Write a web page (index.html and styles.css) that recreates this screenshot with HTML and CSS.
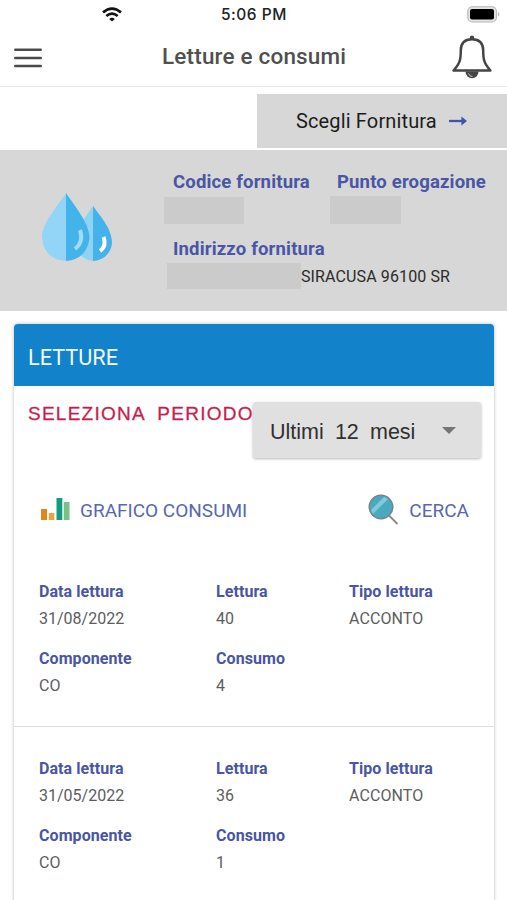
FILE: index.html
```html
<!DOCTYPE html>
<html lang="it">
<head>
<meta charset="utf-8">
<title>Letture e consumi</title>
<link rel="stylesheet" href="styles.css">
</head>
<body>
<div class="status">
  <svg class="wifi" viewBox="0 0 20 15" width="20" height="15" fill="none" stroke="#111" stroke-width="2.7"><path d="M1 5.4Q10-2.3 19 5.4M4.3 9Q10 4.3 15.7 9"/><path d="M7.2 11.9Q10 9.6 12.8 11.9L10 14.6z" fill="#111" stroke="none"/></svg>
  <span class="time">5:06 PM</span>
  <svg class="battery" viewBox="0 0 33 17" width="33" height="17"><rect x=".8" y=".8" width="28.6" height="15.2" rx="4.5" fill="#e4e4e4" stroke="#b5b5b5" stroke-width="1.1"/><rect x="3" y="3" width="24" height="10.6" rx="2" fill="#000"/><path d="M31 6q2.6 2 0 4.6z" fill="#b5b5b5"/></svg>
</div>
<header class="topbar">
  <svg class="menu" viewBox="0 0 28 20" width="28" height="20" stroke="#4a4a4a" stroke-width="2.5" stroke-linecap="round"><path d="M1.3 1.7h25.4M1.3 9.9h25.4M1.3 18h25.4"/></svg>
  <h1 class="title">Letture e consumi</h1>
  <svg class="bell" viewBox="0 0 40 44" width="40" height="44"><path d="M13.500 36.500a6.500 6.800 0 0 0 13 0z" fill="#454545"/><path d="M16.500 38.500q1 3 4 3.200" fill="none" stroke="#ccc" stroke-width="1"/><circle cx="20" cy="2.700" r="2.200" fill="#454545"/><path d="M20 4.200C12 4.200 8.800 9 8.800 15.500C8.800 25 7.800 28.500 1.600 35.500H38.400C32.200 28.500 31.200 25 31.200 15.500C31.200 9 28 4.200 20 4.200z" fill="#fff" stroke="#454545" stroke-width="2.500" stroke-linejoin="round"/></svg>
</header>
<div class="choose-row">
  <button class="choose"><span>Scegli Fornitura</span><svg viewBox="0 0 18 10" width="18" height="10"><path d="M0 5h14" stroke="#4253ab" stroke-width="2.300"/><path d="M12.400.6L18 5l-5.600 4.400z" fill="#4253ab"/></svg></button>
</div>
<section class="supply">
  <svg class="drops" viewBox="0 0 72 70" width="72" height="70"><path d="M51 14C57 23 70 36 70 51Q68 67 51 69Q36 67 34 51C34 36 45 23 51 14z" fill="#8fd3f4"/><path d="M51 14C57 23 70 36 70 51Q68 67 51 69z" fill="#43b3ea"/><path d="M24 1C33 15 47.500 31 47.500 46Q45 67 24 69Q2 67 0 46C0 31 15 15 24 1z" fill="#93d5f6"/><path d="M24 1C33 15 47.500 31 47.500 46Q45 67 24 69z" fill="#43b3ea"/><path d="M38 38Q42 50 33 57" fill="none" stroke="#a0dbf7" stroke-width="4"/><path d="M61.500 45Q65 54 58 59" fill="none" stroke="#fff" stroke-width="4"/></svg>
  <div class="supply-info">
    <div class="supply-pair">
      <div class="code"><div class="label">Codice fornitura</div><div class="mask mask-code"></div></div>
      <div class="point"><div class="label">Punto erogazione</div><div class="mask mask-point"></div></div>
    </div>
    <div class="label">Indirizzo fornitura</div>
    <div class="address"><div class="mask mask-address"></div><span>SIRACUSA 96100 SR</span></div>
  </div>
</section>
<main class="card">
  <h2 class="card-head">LETTURE</h2>
  <div class="period">
    <span class="period-label">SELEZIONA PERIODO</span>
    <div class="select"><span>Ultimi 12 mesi</span><svg viewBox="0 0 14 7" width="14" height="7"><path d="M0 0h14L7 7z" fill="#757575"/></svg></div>
  </div>
  <div class="actions">
    <a class="action"><svg viewBox="0 0 29 24" width="29" height="24"><path d="M0 12h6v11H0z" fill="#e18717"/><path d="M7.800 16h5.500v7H7.800z" fill="#efa13a"/><path d="M15.500 1h5.800v22h-5.800z" fill="#159a80"/><path d="M22.700 5h5.800v18h-5.800z" fill="#79c283"/></svg><span>GRAFICO CONSUMI</span></a>
    <a class="action"><svg viewBox="0 0 31 31" width="31" height="31"><path d="M21 21.500L29.500 30" stroke="#888" stroke-width="1.800"/><circle cx="13" cy="13" r="11.800" fill="#48a9bf" stroke="#77838b" stroke-width="1.400"/><path d="M3 16L16 3l4 2L5 20z" fill="#7fcbdc"/></svg><span>CERCA</span></a>
  </div>
  <section class="reading">
    <div><b>Data lettura</b><span>31/08/2022</span></div><div><b>Lettura</b><span>40</span></div><div><b>Tipo lettura</b><span class="type">ACCONTO</span></div>
    <div><b>Componente</b><span>CO</span></div><div><b>Consumo</b><span>4</span></div>
  </section>
  <section class="reading">
    <div><b>Data lettura</b><span>31/05/2022</span></div><div><b>Lettura</b><span>36</span></div><div><b>Tipo lettura</b><span class="type">ACCONTO</span></div>
    <div><b>Componente</b><span>CO</span></div><div><b>Consumo</b><span>1</span></div>
  </section>
</main>
</body>
</html>
```
FILE: styles.css
```css
* { box-sizing: border-box; }
body { margin: 0; height: 900px; overflow: hidden; background: #fff; font-family: Roboto, sans-serif; color: #333; }
svg { display: block; flex: none; }
.status { height: 30px; display: grid; grid-template-columns: 102px 20px 1fr 33px; align-items: start; padding-right: 7px; }
.wifi { grid-column: 2; margin-top: 7px; }
.time { font: 500 15.500px/20px Inter, sans-serif; color: #222; letter-spacing: .5px; margin: 5px 0 0 99px; white-space: nowrap; }
.battery { margin-top: 6px; }
.topbar { height: 57px; border-bottom: 1px solid #e9e9e9; display: flex; align-items: center; padding: 0 15px 0 14px; }
.title { flex: 1; margin: 0 0 4px; padding-left: 120px; font-size: 22.500px; line-height: 30px; font-weight: 500; letter-spacing: .18px; color: #505050; white-space: nowrap; }
.bell { margin-bottom: 2px; }
.choose-row { height: 63px; display: flex; justify-content: flex-end; padding-top: 7px; }
.choose { width: 250px; height: 54px; border: 0; padding: 0 40px 0 39px; background: #d7d7d7; display: flex; align-items: center; justify-content: space-between; font: 400 20px/30px Roboto, sans-serif; letter-spacing: .14px; color: #1c1c1c; white-space: nowrap; }
.supply { height: 161px; background: #d7d7d7; display: flex; }
.drops { margin: 42px 0 0 42px; }
.supply-info { width: 343px; margin-left: 50px; padding-top: 20px; }
.supply-pair { display: flex; height: 67px; }
.code { width: 166px; }
.label { font-size: 18.500px; line-height: 24px; font-weight: 700; letter-spacing: .17px; color: #4856a5; padding-left: 9px; white-space: nowrap; }
.point .label { padding-left: 7px; }
.mask { background: #cbcbcb; flex: none; }
.mask-code { width: 80px; height: 27px; margin-top: 3px; }
.mask-point { width: 71px; height: 28px; margin-top: 2px; }
.address { height: 26px; display: flex; margin: 2px 0 0 3px; font-size: 16px; line-height: 26px; letter-spacing: .12px; color: #2b2b2b; white-space: nowrap; }
.address span { padding-top: 1px; }
.mask-address { width: 134px; height: 26px; }
.card { width: 480px; height: 620px; margin: 13px 0 0 14px; border-radius: 4px 4px 0 0; box-shadow: 0 0 3px 1px #d4d4d4; }
.card-head { margin: 0; height: 62px; background: #1283cb; border-radius: 4px 4px 0 0; padding: 4px 14px 0; font-size: 21.700px; line-height: 59px; font-weight: 400; color: #f1faff; }
.period { height: 95px; display: flex; align-items: flex-start; padding: 16px 13px 0 14px; font-family: "Liberation Sans", sans-serif; }
.period-label { width: 225px; font-size: 19px; line-height: 24px; color: #c81e4d; letter-spacing: 1.250px; word-spacing: 6px; white-space: nowrap; -webkit-text-stroke: .3px #c81e4d; }
.select { flex: none; width: 228px; height: 56px; background: #e0e0e0; border-radius: 3px; box-shadow: 0 1px 3px #b5b5b5; padding: 3px 25px 0 17px; display: flex; align-items: center; justify-content: space-between; font-size: 21.500px; line-height: 30px; color: #303030; word-spacing: 5.200px; white-space: nowrap; }
.select svg { margin-bottom: 3px; }
.actions { height: 69px; display: flex; justify-content: space-between; padding: 10px 25px 0 27px; font-size: 19px; line-height: 36px; color: #5867b1; }
.action { height: 36px; display: flex; align-items: center; gap: 10px; white-space: nowrap; }
.action span { padding-top: 3px; }
.reading { height: 177px; border-bottom: 1px solid #dedede; display: grid; grid-template-columns: 177px 133px 1fr; grid-template-rows: 67px 67px; padding: 28px 0 0 25px; }
.reading b, .reading span { display: block; width: max-content; font-size: 16px; line-height: 27px; white-space: nowrap; }
.reading b { font-weight: 700; letter-spacing: .07px; color: #4856a5; }
.reading span { color: #5d5d5d; }
.reading .type { letter-spacing: .1px; }
```
